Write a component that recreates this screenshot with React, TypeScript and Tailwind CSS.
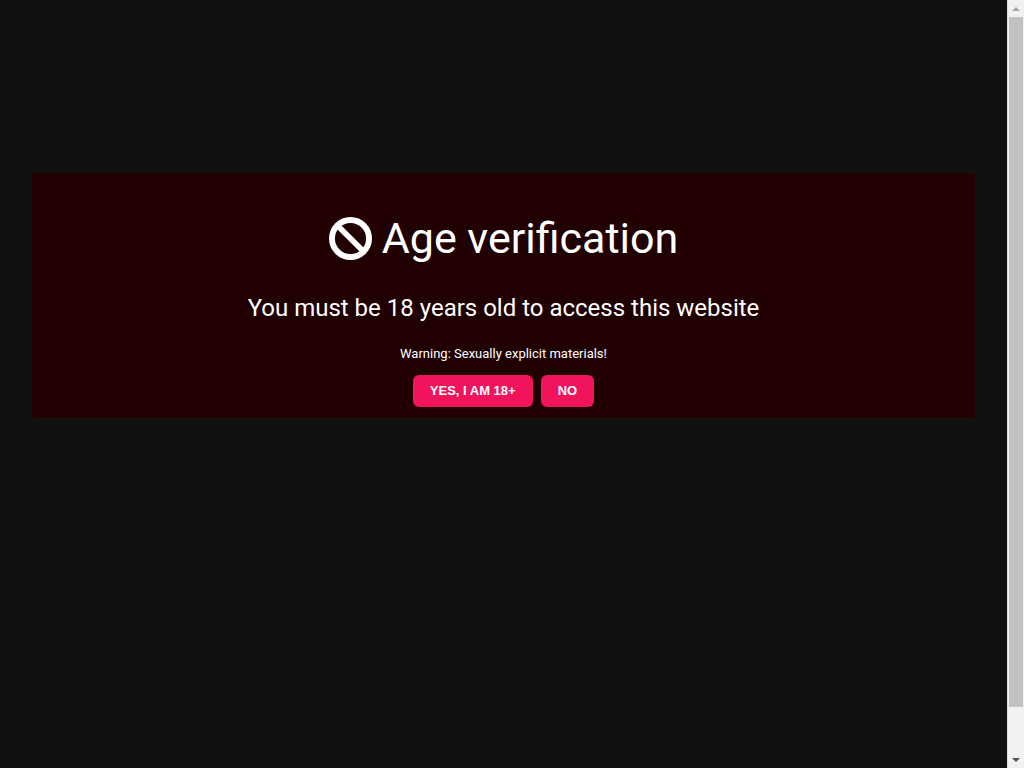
const answers = [
  { label: "YES, I AM 18+", value: "yes" },
  { label: "NO", value: "no" },
];

function BanIcon() {
  return (
    <svg
      viewBox="0 0 42 42"
      className="h-[43px] w-[43px] shrink-0"
      fill="none"
      stroke="currentColor"
      aria-hidden="true"
    >
      <circle cx="21" cy="21" r="18.1" strokeWidth="5.8" />
      <path d="M8.5 8.5 33.5 33.5" strokeWidth="5.4" />
    </svg>
  );
}

function ScrollRail() {
  return (
    <div
      className="flex w-[17px] shrink-0 flex-col items-center border-l border-[#dcdcdc] bg-[#f1f1f1]"
      aria-hidden="true"
    >
      <div className="flex h-[17px] shrink-0 items-center">
        <svg viewBox="0 0 8 4" className="h-1 w-2" fill="#a3a3a3">
          <path d="M0 4 4 0 8 4z" />
        </svg>
      </div>
      <div className="flex w-full flex-1 flex-col px-px">
        <div className="h-[94%] bg-[#c1c1c1]" />
      </div>
      <div className="flex h-[17px] shrink-0 items-center">
        <svg viewBox="0 0 8 4" className="h-1 w-2" fill="#505050">
          <path d="M0 0 4 4 8 0z" />
        </svg>
      </div>
    </div>
  );
}

export default function App() {
  return (
    <div className="flex h-screen bg-[#111111] font-['Roboto',sans-serif] text-white">
      <main className="flex-1 px-8 pt-[173px]">
        <section className="flex flex-col items-center border border-[#2a0000] bg-[#200000] px-4 pt-10 pb-[10px] text-center">
          <h1 className="flex items-center gap-[10px] text-[43px] leading-[48px]">
            <BanIcon />
            Age verification
          </h1>
          <h2 className="mt-[26px] text-2xl leading-[40px]">
            You must be 18 years old to access this website
          </h2>
          <p className="mt-4 text-[13px] leading-5">
            Warning: Sexually explicit materials!
          </p>
          <div className="mt-[11px] flex gap-2">
            {answers.map((answer) => (
              <button
                key={answer.value}
                type="button"
                className="h-8 rounded-md bg-[#f1145c] px-[17px] font-['Liberation_Sans',sans-serif] text-[13px] font-bold"
              >
                {answer.label}
              </button>
            ))}
          </div>
        </section>
      </main>

      {/* Page scroll rail */}
      <ScrollRail />
    </div>
  );
}
